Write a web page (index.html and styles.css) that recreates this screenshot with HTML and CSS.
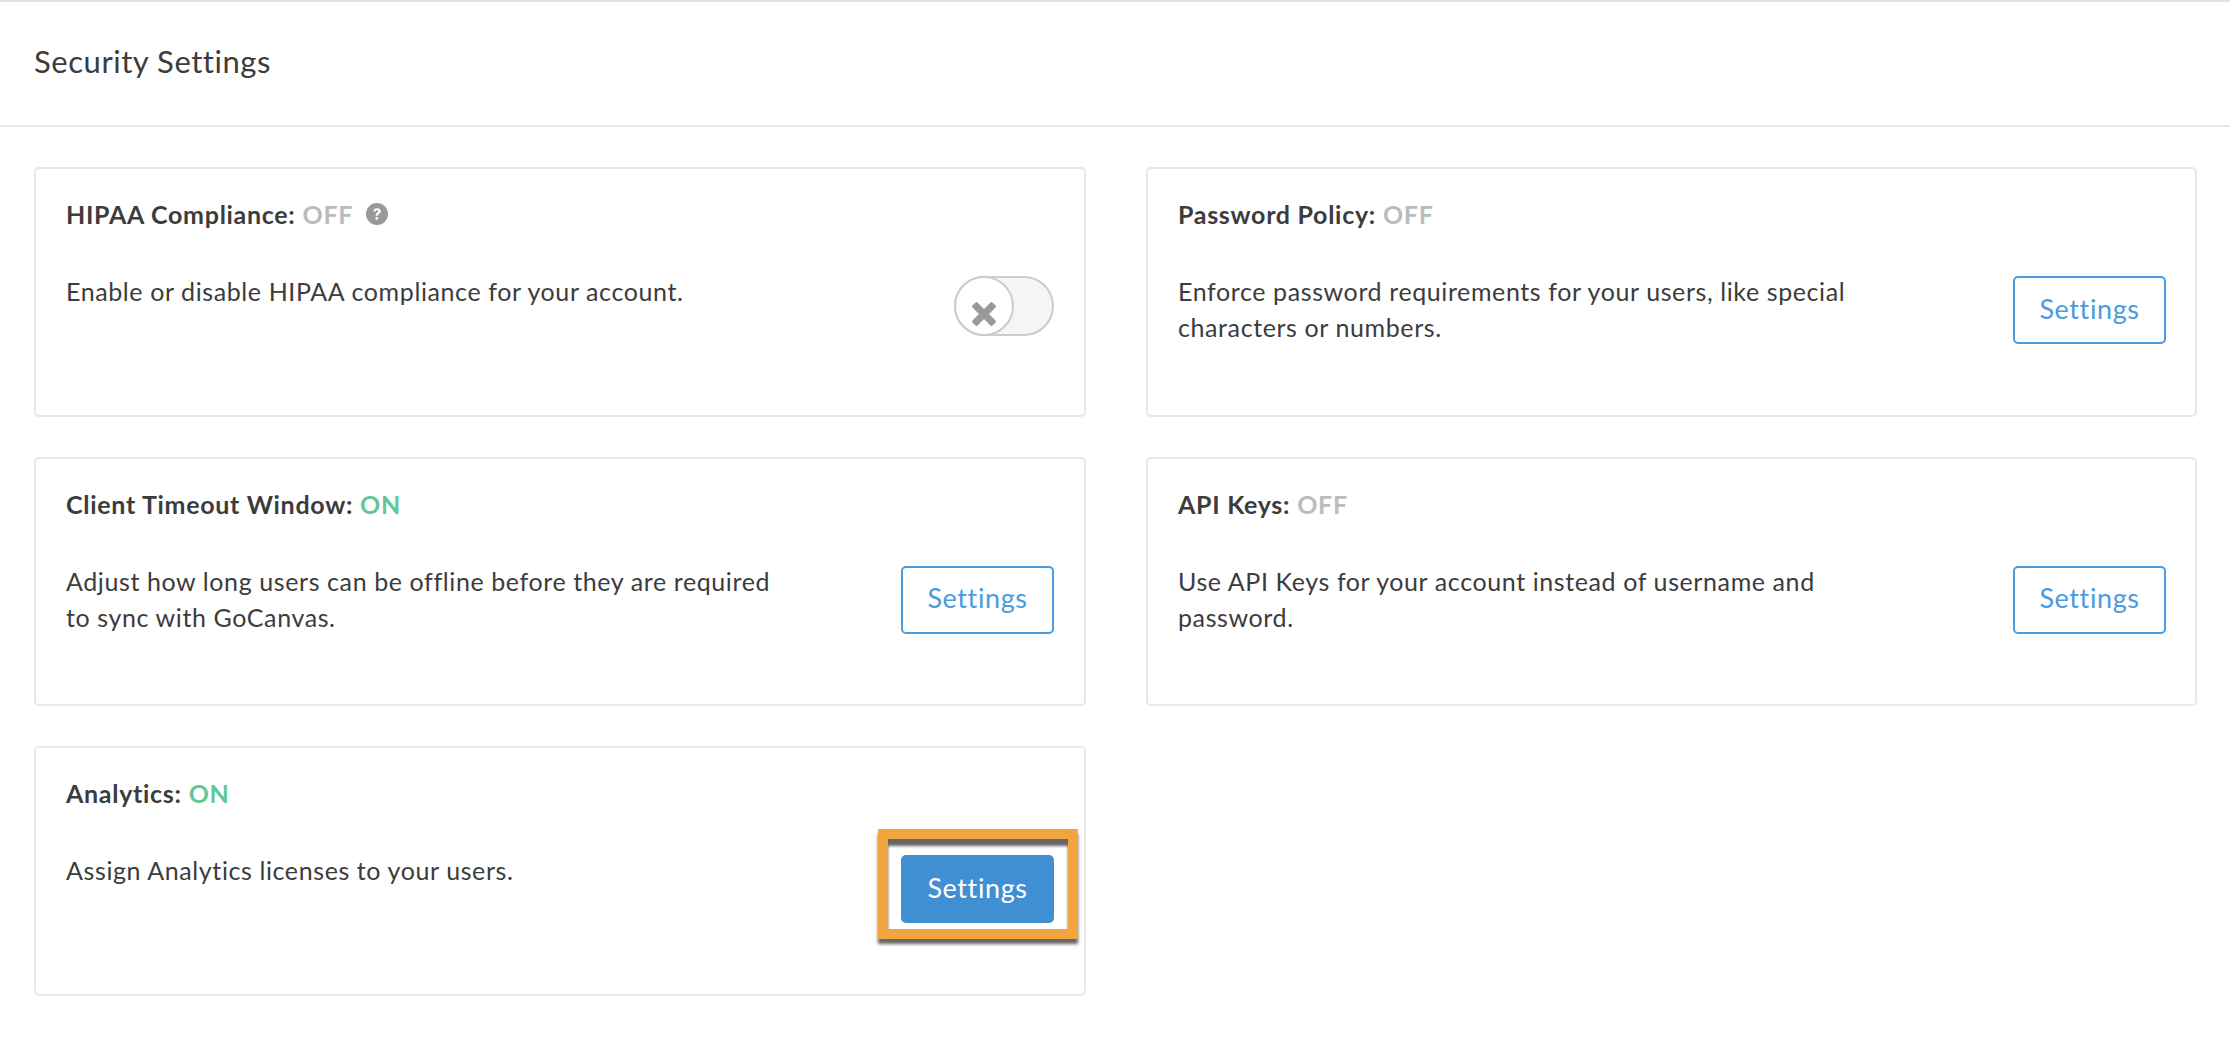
FILE: index.html
```html
<!DOCTYPE html>
<html lang="en">
<head>
<meta charset="utf-8">
<title>Security Settings</title>
<link rel="stylesheet" href="styles.css">
</head>
<body>
<header class="page-header"><h1>Security Settings</h1></header>
<main class="cards">
  <section class="card">
    <h2>HIPAA Compliance: <span class="off">OFF</span>
      <svg class="help" viewBox="0 0 22 22" aria-hidden="true"><circle cx="11" cy="11" r="11" fill="#999"/><path d="M7.4 8.400C7.600 6.300 9 5.200 11.100 5.200c2.200 0 3.700 1.200 3.700 3 0 1.400-.8 2.100-1.800 2.800-.8.5-1 .9-1 1.800H9.600c0-1.500.4-2.300 1.500-3 .8-.5 1.200-.9 1.200-1.500 0-.7-.5-1.100-1.200-1.100-.8 0-1.300.5-1.400 1.400z" fill="#fff"/><rect x="9.600" y="14" width="2.500" height="2.600" fill="#fff"/></svg>
    </h2>
    <div class="card-row">
      <p>Enable or disable HIPAA compliance for your account.</p>
      <div class="toggle"><span class="knob"><svg viewBox="0 0 24 24" aria-hidden="true"><path d="M4.500 0 12 7.500 19.500 0 24 4.500 16.500 12 24 19.500 19.500 24 12 16.500 4.500 24 0 19.500 7.500 12 0 4.500z" fill="#999" stroke="#999" stroke-width="1" stroke-linejoin="round"/></svg></span></div>
    </div>
  </section>
  <section class="card">
    <h2>Password Policy: <span class="off">OFF</span></h2>
    <div class="card-row">
      <p>Enforce password requirements for your users, like special characters or numbers.</p>
      <button class="btn">Settings</button>
    </div>
  </section>
  <section class="card">
    <h2>Client Timeout Window: <span class="on">ON</span></h2>
    <div class="card-row">
      <p>Adjust how long users can be offline before they are required to sync with GoCanvas.</p>
      <button class="btn">Settings</button>
    </div>
  </section>
  <section class="card">
    <h2>API Keys: <span class="off">OFF</span></h2>
    <div class="card-row">
      <p>Use API Keys for your account instead of username and password.</p>
      <button class="btn">Settings</button>
    </div>
  </section>
  <section class="card">
    <h2>Analytics: <span class="on">ON</span></h2>
    <div class="card-row">
      <p>Assign Analytics licenses to your users.</p>
      <div class="btn-wrap">
        <button class="btn btn-solid">Settings</button>
        <span class="highlight"></span>
      </div>
    </div>
  </section>
</main>
</body>
</html>
```
FILE: styles.css
```css
* { box-sizing: border-box; }
html, body { margin: 0; padding: 0; background: #fff; }
body {
  font-family: "Lato", "Liberation Sans", sans-serif;
  color: #3c3c3c;
  border-top: 2px solid #dde0e4;
}
.page-header {
  height: 125px;
  border-bottom: 2px solid #e8e8e8;
  padding: 38px 34px 0;
}
.page-header h1 {
  margin: 0;
  font-size: 31px;
  letter-spacing: .55px;
  line-height: 42px;
  font-weight: 400;
}
.cards {
  display: grid;
  grid-template-columns: 1052px 1051px;
  grid-auto-rows: 249.5px;
  column-gap: 60px;
  row-gap: 40px;
  padding: 40px 0 0 34px;
}
.card {
  border: 2px solid #e8e8e8;
  border-radius: 5px;
  padding: 28px 29px 0 30px;
}
.card:nth-child(odd) { padding-right: 30px; }
.card h2 {
  margin: 0 0 45px;
  font-size: 25px;
  letter-spacing: .7px;
  line-height: 34px;
  font-weight: 700;
  display: flex;
  align-items: center;
  gap: 7px;
}
.off { color: #bbb; }
.on { color: #5fc894; }
.help { width: 22px; height: 22px; margin-left: 6px; }
.card-row {
  display: flex;
  justify-content: space-between;
  align-items: flex-start;
}
.card-row p {
  margin: -3px 0 0;
  width: 724px;
  font-size: 25px;
  letter-spacing: .6px;
  line-height: 36px;
}
.btn {
  width: 153px;
  height: 68px;
  border: 2px solid #4a9be0;
  border-radius: 5px;
  background: #fff;
  color: #4a9be0;
  font: 400 27px "Lato", "Liberation Sans", sans-serif;
  letter-spacing: .6px;
  padding: 0 0 4px;
}
.btn-solid {
  background: #418fd3;
  border-color: #418fd3;
  color: #fff;
  display: block;
}
.btn-wrap { position: relative; }
.highlight {
  position: absolute;
  left: -23px;
  right: -24px;
  top: -26px;
  bottom: -16px;
  border: 10px solid #f0a63c;
  box-shadow: 0 5px 3px rgba(0,0,0,.6), inset 0 7px 3px rgba(0,0,0,.6);
  pointer-events: none;
}
.toggle {
  width: 100px;
  height: 60px;
  border: 2px solid #ccc;
  border-radius: 30px;
  background: #f5f5f5;
  position: relative;
}
.knob {
  position: absolute;
  left: -2px;
  top: -2px;
  width: 60px;
  height: 60px;
  border: 2px solid #ccc;
  border-radius: 50%;
  background: #fff;
  display: flex;
  justify-content: center;
  padding-top: 24px;
}
.knob svg { width: 24px; height: 24px; }
```
